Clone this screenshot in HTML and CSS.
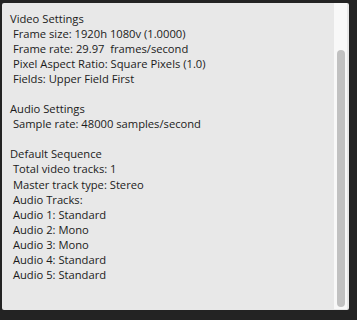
FILE: index.html
```html
<!DOCTYPE html>
<html lang="en">
<head>
    <meta charset="UTF-8">
    <title>Sequence Settings</title>
    <link rel="stylesheet" href="styles.css">
</head>
<body>
    <div class="info-panel">
        <div class="info-text">Video Settings
 Frame size: 1920h 1080v (1.0000)
 Frame rate: 29.97  frames/second
 Pixel Aspect Ratio: Square Pixels (1.0)
 Fields: Upper Field First

Audio Settings
 Sample rate: 48000 samples/second

Default Sequence
 Total video tracks: 1
 Master track type: Stereo
 Audio Tracks:
 Audio 1: Standard
 Audio 2: Mono
 Audio 3: Mono
 Audio 4: Standard
 Audio 5: Standard</div>
        <div class="scroll-track">
            <div class="scroll-thumb"></div>
        </div>
    </div>
</body>
</html>
```

FILE: styles.css
```css
body {
    margin: 0;
    padding: 3px 8px 10px 2px;
    background-color: #232323;
    font-family: "Open Sans", sans-serif;
}

.info-panel {
    display: flex;
    height: 307px;
    background-color: #e8e8e8;
    border-radius: 2px;
    padding-right: 2px;
}

.info-text {
    flex: 1;
    padding: 8px 0 0 8px;
    font-size: 11.2px;
    line-height: 15.05px;
    color: #1b1b1b;
    white-space: pre;
    overflow: hidden;
}

.scroll-track {
    width: 13px;
    margin-bottom: 1px;
    background-color: #f8f8f8;
    display: flex;
    flex-direction: column;
    align-items: center;
    padding-top: 47px;
    padding-bottom: 2px;
}

.scroll-thumb {
    flex: 1;
    width: 8px;
    background-color: #c1c1c1;
    border-radius: 4px;
}
```
